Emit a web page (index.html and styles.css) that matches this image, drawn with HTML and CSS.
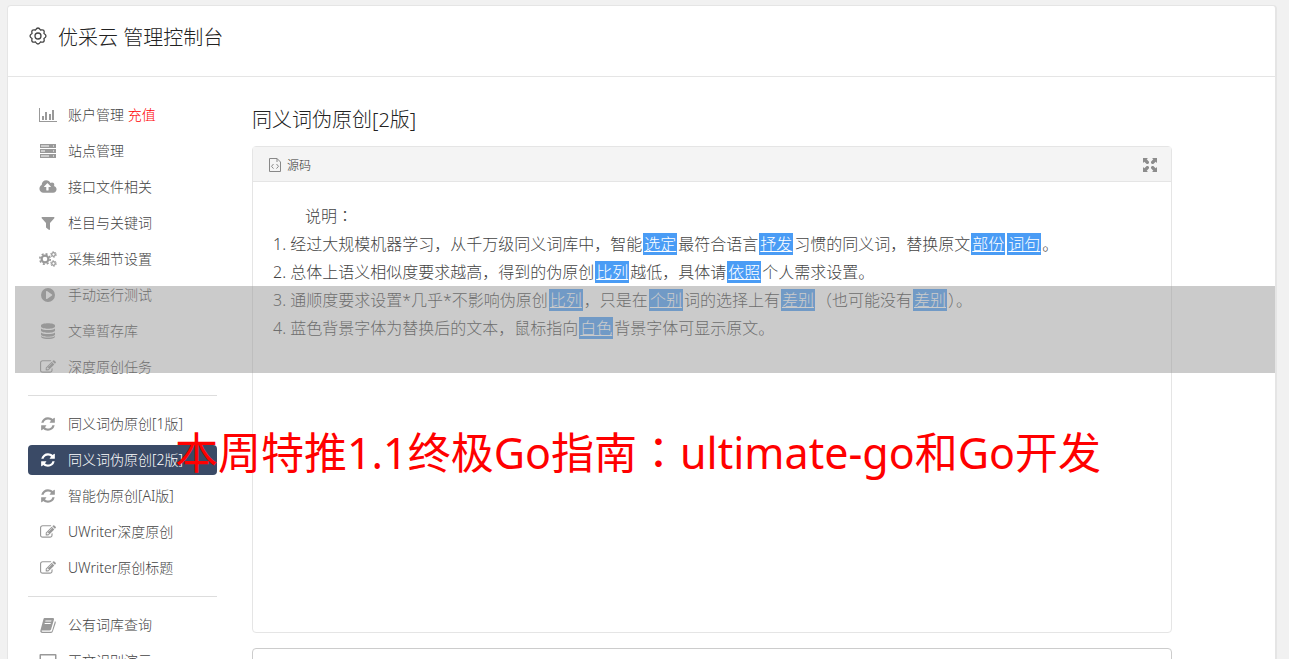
FILE: index.html
```html
<!DOCTYPE html>
<html lang="zh-CN">
<head>
  <meta charset="UTF-8">
  <title>优采云 管理控制台</title>
  <link rel="stylesheet" href="styles.css">
</head>
<body>
  <!-- shared icons -->
  <svg class="sprite" aria-hidden="true">
    <symbol id="i-refresh" viewBox="0 0 1792 1792"><path d="M1639 1056q0 5-1 7-64 268-268 434.500t-478 166.500q-146 0-282.500-55t-243.500-157l-129 129q-19 19-45 19t-45-19-19-45v-448q0-26 19-45t45-19h448q26 0 45 19t19 45-19 45l-137 137q71 66 161 102t187 36q134 0 250-65t186-179q11-17 53-117 8-23 30-23h192q13 0 22.500 9.500t9.500 22.500zm25-800v448q0 26-19 45t-45 19h-448q-26 0-45-19t-19-45 19-45l138-138q-148-137-349-137-134 0-250 65t-186 179q-11 17-53 117-8 23-30 23h-199q-13 0-22.500-9.500t-9.500-22.500v-7q65-268 270-434.500t480-166.500q146 0 284 55.500t245 156.500l130-129q19-19 45-19t45 19 19 45z"/></symbol>
    <symbol id="i-edit" viewBox="0 0 1792 1792"><path d="M888 1184l116-116-152-152-116 116v56h96v96h56zm440-720q-16-16-33 1l-350 350q-17 17-1 33t33-1l350-350q17-17 1-33zm80 594v190q0 119-84.500 203.500t-203.500 84.500h-832q-119 0-203.500-84.500t-84.500-203.500v-832q0-119 84.500-203.500t203.500-84.500h832q63 0 117 25 15 7 18 23 3 17-9 29l-49 49q-14 14-32 8-23-6-45-6h-832q-66 0-113 47t-47 113v832q0 66 47 113t113 47h832q66 0 113-47t47-113v-126q0-13 9-22l64-64q15-15 35-7t20 29zm-96-738l288 288-672 672h-288v-288zm444 132l-92 92-288-288 92-92q28-28 68-28t68 28l152 152q28 28 28 68t-28 68z"/></symbol>
  </svg>

  <div class="page">
    <header class="page-header">
      <svg class="gear" viewBox="0 0 20 20"><path d="M16 7.500Q20 10 16 12.500Q17.100 17.100 12.500 16Q10 20 7.500 16Q2.900 17.100 4 12.500Q0 10 4 7.500Q2.900 2.900 7.500 4Q10 0 12.500 4Q17.100 2.900 16 7.500Z"/><circle cx="10" cy="10" r="3"/></svg>
      <h1>优采云 管理控制台</h1>
    </header>

    <div class="content">
      <nav class="sidebar">
        <a href="#"><svg class="icon" viewBox="0 0 18 16"><path d="M0 1h1v13h17v1H0zM3 9h2v4H3zM6 5h2v8H6zM10 7h2v6h-2zM13 3h2v10h-2z"/></svg><span>账户管理 <em>充值</em></span></a>
        <a href="#"><svg class="icon" viewBox="0 0 18 16"><path fill-rule="evenodd" d="M1 1h16v4H1zM2 2.500v1h8v-1zM14 2.500v1h1v-1zM1 6h16v4H1zM2 7.500v1h4v-1zM14 7.500v1h1v-1zM1 11h16v4H1zM2 12.500v1h8v-1zM14 12.500v1h1v-1z"/></svg><span>站点管理</span></a>
        <a href="#"><svg class="icon" viewBox="0 0 1920 1792"><path d="M1280 864q0-14-9-23l-352-352q-9-9-23-9t-23 9l-351 351q-10 12-10 24 0 14 9 23t23 9h224v352q0 13 9.500 22.500t22.500 9.500h192q13 0 22.500-9.500t9.500-22.500v-352h224q13 0 22.500-9.500t9.500-22.500zm640 288q0 159-112.500 271.500t-271.500 112.500h-1088q-185 0-316.500-131.500t-131.500-316.500q0-130 70-240t188-165q-2-30-2-43 0-212 150-362t362-150q156 0 285.500 87t188.500 231q71-62 166-62 106 0 181 75t75 181q0 76-41 138 130 31 213.500 135.500t83.500 238.500z"/></svg><span>接口文件相关</span></a>
        <a href="#"><svg class="icon" viewBox="0 0 18 16"><path d="M3 2h12q.8.500.3 1.300L11 8v6.500q-.4.700-1.200.3L7 12.500V8L2.700 3.300Q2.200 2.500 3 2z"/></svg><span>栏目与关键词</span></a>
        <a href="#"><svg class="icon" viewBox="0 0 18 16"><g fill="none" stroke="currentColor"><circle cx="6" cy="8" r="3.400" stroke-width="2.200"/><circle cx="6" cy="8" r="5.200" stroke-width="1.600" stroke-dasharray="2.040 2.040"/><circle cx="14.500" cy="3.500" r="1.800" stroke-width="1.300"/><circle cx="14.500" cy="3.500" r="2.800" stroke-width="1" stroke-dasharray="1.470 1.460"/><circle cx="14.500" cy="12.500" r="1.800" stroke-width="1.300"/><circle cx="14.500" cy="12.500" r="2.800" stroke-width="1" stroke-dasharray="1.470 1.460"/></g></svg><span>采集细节设置</span></a>
        <a href="#"><svg class="icon" viewBox="0 0 18 16"><path fill-rule="evenodd" d="M9 1a7 7 0 0 1 0 14A7 7 0 0 1 9 1zM7 4.500v7q.3.800 1 .4l5-3.400q.5-.5 0-1L8 4.100q-.7-.4-1 .4z"/></svg><span>手动运行测试</span></a>
        <a href="#"><svg class="icon" viewBox="0 0 18 16"><path d="M2 2.500C2-.5 16-.5 16 2.500v1c0 3-14 3-14 0zM2 5.500c2 2 12 2 14 0v2c0 3-14 3-14 0zM2 9.500c2 2 12 2 14 0v2c0 3-14 3-14 0zM2 13c2 2 12 2 14 0v.8c0 3-14 3-14 0z"/></svg><span>文章暂存库</span></a>
        <a href="#"><svg class="icon"><use href="#i-edit"/></svg><span>深度原创任务</span></a>
        <hr>
        <a href="#"><svg class="icon"><use href="#i-refresh"/></svg><span>同义词伪原创[1版]</span></a>
        <a href="#" class="active"><svg class="icon"><use href="#i-refresh"/></svg><span>同义词伪原创[2版]</span></a>
        <a href="#"><svg class="icon"><use href="#i-refresh"/></svg><span>智能伪原创[AI版]</span></a>
        <a href="#"><svg class="icon"><use href="#i-edit"/></svg><span>UWriter深度原创</span></a>
        <a href="#"><svg class="icon"><use href="#i-edit"/></svg><span>UWriter原创标题</span></a>
        <hr>
        <a href="#"><svg class="icon" viewBox="0 0 18 16"><path fill-rule="evenodd" d="M5.500 1H14q1.500 0 1 1.500L12 12.500q-.4 1-1.500 1H3q-.7.200-.3.800.2.400.8.400H12q.8 0 1-.8L16 4q1.200.8.700 2L14 14q-.5 2-2 2H3.500Q.500 15.500 1.500 13L4.500 2q.2-.8 1-1zM6.500 3.500L6.200 4.500h6L12.500 3.500zM5.800 6L5.500 7h6L11.800 6z"/></svg><span>公有词库查询</span></a>
        <a href="#"><svg class="icon" viewBox="0 0 18 16"><path fill-rule="evenodd" d="M1.500 1h15q1 0 1 1v10q0 1-1 1H11v2H7v-2H1.500q-1 0-1-1V2q0-1 1-1zM2 2.500V10h14V2.500z"/></svg><span>正文识别演示</span></a>
      </nav>

      <main class="main">
        <h2>同义词伪原创[2版]</h2>
        <section class="editor">
          <div class="toolbar">
            <button type="button"><svg class="source" viewBox="0 0 12 14"><path d="M.5.500H8L11.500 4v9.500H.5zM8 .500V4M4.500 6l-2 2.300 2 2.300M7.500 6l2 2.300-2 2.300"/></svg>源码</button>
            <button type="button" aria-label="全屏"><svg class="expand" viewBox="0 0 14 14"><path d="M0 0h5L3.700 1.300 6 3.700V5L5 6H3.700L1.300 3.700 0 5zM14 0v5l-1.300-1.300L10.300 6H9L8 5V3.700l2.300-2.400L9 0zM0 14V9l1.300 1.300L3.700 8H5l1 1v1.300l-2.300 2.400L5 14zM14 14H9l1.300-1.300L8 10.300V9l1-1h1.300l2.400 2.300L14 9z"/></svg></button>
          </div>
          <div class="editor-body">
            <p>说明<span class="mid" lang="zh-TW">：</span></p>
            <ol>
              <li>经过大规模机器学习，从千万级同义词库中，智能<u>选定</u>最符合语言<u>抒发</u>习惯的同义词，替换原文<u>部份</u><u>词句</u>。</li>
              <li>总体上语义相似度要求越高，得到的伪原创<u>比列</u>越低，具体请<u>依照</u>个人需求设置。</li>
              <li>通顺度要求设置*几乎*不影响伪原创<u>比列</u>，只是在<u>个别</u>词的选择上有<u>差别</u>（也可能没有<u>差别</u>）。</li>
              <li>蓝色背景字体为替换后的文本，鼠标指向<u>白色</u>背景字体可显示原文。</li>
            </ol>
          </div>
        </section>
        <section class="result"></section>
      </main>
    </div>

    <div class="shade"></div>
    <div class="headline">本周特推1.1终极Go指南<span class="mid" lang="zh-TW">：</span>ultimate-go和Go开发</div>
  </div>
</body>
</html>
```
FILE: styles.css
```css
* {
  box-sizing: border-box;
}

body {
  margin: 0;
  padding: 5px 12px 0 7px;
  height: 100vh;
  overflow: hidden;
  background: #f1f1f1;
  color: #555;
  font-family: "Noto Sans", "Noto Sans CJK SC", sans-serif;
  font-size: 14px;
}

h1, h2, p, ol {
  margin: 0;
  padding: 0;
  font-weight: 300;
}

.sprite {
  position: absolute;
  width: 0;
  height: 0;
}

.page {
  position: relative;
  min-height: 100vh;
  background: #fff;
  border: 1px solid #e5e5e5;
  border-right-width: 2px;
  border-radius: 4px;
}

.page-header {
  display: flex;
  align-items: center;
  gap: 10px;
  height: 71px;
  padding: 0 20px 10px;
  border-bottom: 1px solid #e5e5e5;
}

.page-header h1 {
  padding-top: 3px;
  color: #222;
  font-size: 20px;
  line-height: 28px;
}

.gear {
  width: 20px;
  height: 20px;
  fill: none;
  stroke: #444;
  stroke-width: 1.3;
}

.content {
  display: flex;
  gap: 35px;
  padding: 23px 20px 0;
}

.sidebar {
  display: flex;
  flex-direction: column;
  gap: 6px;
  flex: 0 0 189px;
}

.sidebar a {
  display: flex;
  align-items: center;
  gap: 11px;
  height: 30px;
  padding: 0 11px;
  border-radius: 4px;
  color: #444;
  font-weight: 300;
  line-height: 20px;
  white-space: nowrap;
  text-decoration: none;
}

.sidebar em {
  color: #f00;
  font-style: normal;
}

.sidebar hr {
  width: 100%;
  margin: 7px 0;
  border: 0;
  border-top: 1px solid #ddd;
}

.icon {
  flex: none;
  width: 18px;
  height: 16px;
  color: #999;
  fill: currentColor;
}

.sidebar .active {
  background: #3a4a66;
  color: #fff;
}

.active .icon {
  color: #fff;
}

.main {
  flex: 0 1 920px;
}

.main h2 {
  padding: 6px 0 12px;
  color: #222;
  font-size: 20px;
  line-height: 28px;
}

.editor {
  border: 1px solid #e5e5e5;
  border-radius: 4px;
}

.toolbar {
  display: flex;
  justify-content: space-between;
  height: 35px;
  padding: 2px 14px 0 16px;
  background: #f4f4f4;
  border-bottom: 1px solid #e5e5e5;
}

.toolbar button {
  display: flex;
  align-items: center;
  gap: 6px;
  padding: 0;
  border: 0;
  background: none;
  color: #333;
  font-family: inherit;
  font-size: 12px;
  font-weight: 300;
}

.source {
  width: 12px;
  height: 14px;
  fill: none;
  stroke: #888;
}

.expand {
  width: 14px;
  height: 14px;
  fill: #8c8c8c;
}

.editor-body {
  min-height: 450px;
  padding: 19px 20px;
  color: #444;
  font-size: 16px;
  font-weight: 300;
  line-height: 28px;
}

.editor-body p {
  text-indent: 2em;
}

.editor-body ol {
  list-style-position: inside;
}

.editor-body u {
  margin: 0 1px;
  padding: 0 1px;
  background: #4a9cf5;
  color: #fff;
}

.mid {
  font-family: "Noto Sans CJK TC", sans-serif;
}

.result {
  height: 200px;
  margin-top: 15px;
  border: 1px solid #ccc;
  border-radius: 4px;
}

/* strip and headline lie over the page */
.shade {
  position: absolute;
  top: 280px;
  left: 7px;
  right: 0;
  height: 87px;
  background: rgba(151, 151, 151, 0.5);
}

.headline {
  position: absolute;
  top: 414px;
  left: 167px;
  color: #f00;
  font-size: 43px;
  line-height: 60px;
  white-space: nowrap;
}
```
